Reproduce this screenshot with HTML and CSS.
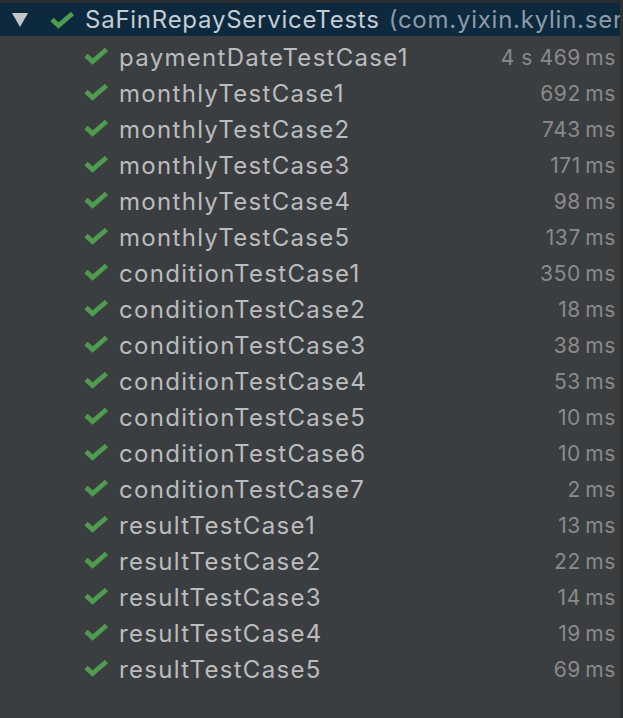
FILE: index.html
```html
<!DOCTYPE html>
<html>
<head>
<meta charset="utf-8">
<link rel="stylesheet" href="styles.css">
</head>
<body>
<div class="panel">
  <div class="topline"></div>
  <div class="tree">
    <div class="suite">
      <span class="arrow"></span>
      <svg class="check" viewBox="0 0 26 18"><path d="M2 8.5 L8.5 14.5 L22.5 2.5" /></svg>
      <span class="suite-name">SaFinRepayServiceTests</span>
      <span class="pkg">(com.yixin.kylin.ser</span>
    </div>
    <ul class="tests">
      <li class="test"><svg class="check" viewBox="0 0 26 18"><path d="M2 8.5 L8.5 14.5 L22.5 2.5" /></svg><span class="name">paymentDateTestCase1</span><span class="time">4 s 469&#8201;ms</span></li>
      <li class="test"><svg class="check" viewBox="0 0 26 18"><path d="M2 8.5 L8.5 14.5 L22.5 2.5" /></svg><span class="name">monthlyTestCase1</span><span class="time">692&#8201;ms</span></li>
      <li class="test"><svg class="check" viewBox="0 0 26 18"><path d="M2 8.5 L8.5 14.5 L22.5 2.5" /></svg><span class="name">monthlyTestCase2</span><span class="time">743&#8201;ms</span></li>
      <li class="test"><svg class="check" viewBox="0 0 26 18"><path d="M2 8.5 L8.5 14.5 L22.5 2.5" /></svg><span class="name">monthlyTestCase3</span><span class="time">171&#8201;ms</span></li>
      <li class="test"><svg class="check" viewBox="0 0 26 18"><path d="M2 8.5 L8.5 14.5 L22.5 2.5" /></svg><span class="name">monthlyTestCase4</span><span class="time">98&#8201;ms</span></li>
      <li class="test"><svg class="check" viewBox="0 0 26 18"><path d="M2 8.5 L8.5 14.5 L22.5 2.5" /></svg><span class="name">monthlyTestCase5</span><span class="time">137&#8201;ms</span></li>
      <li class="test"><svg class="check" viewBox="0 0 26 18"><path d="M2 8.5 L8.5 14.5 L22.5 2.5" /></svg><span class="name">conditionTestCase1</span><span class="time">350&#8201;ms</span></li>
      <li class="test"><svg class="check" viewBox="0 0 26 18"><path d="M2 8.5 L8.5 14.5 L22.5 2.5" /></svg><span class="name">conditionTestCase2</span><span class="time">18&#8201;ms</span></li>
      <li class="test"><svg class="check" viewBox="0 0 26 18"><path d="M2 8.5 L8.5 14.5 L22.5 2.5" /></svg><span class="name">conditionTestCase3</span><span class="time">38&#8201;ms</span></li>
      <li class="test"><svg class="check" viewBox="0 0 26 18"><path d="M2 8.5 L8.5 14.5 L22.5 2.5" /></svg><span class="name">conditionTestCase4</span><span class="time">53&#8201;ms</span></li>
      <li class="test"><svg class="check" viewBox="0 0 26 18"><path d="M2 8.5 L8.5 14.5 L22.5 2.5" /></svg><span class="name">conditionTestCase5</span><span class="time">10&#8201;ms</span></li>
      <li class="test"><svg class="check" viewBox="0 0 26 18"><path d="M2 8.5 L8.5 14.5 L22.5 2.5" /></svg><span class="name">conditionTestCase6</span><span class="time">10&#8201;ms</span></li>
      <li class="test"><svg class="check" viewBox="0 0 26 18"><path d="M2 8.5 L8.5 14.5 L22.5 2.5" /></svg><span class="name">conditionTestCase7</span><span class="time">2&#8201;ms</span></li>
      <li class="test"><svg class="check" viewBox="0 0 26 18"><path d="M2 8.5 L8.5 14.5 L22.5 2.5" /></svg><span class="name">resultTestCase1</span><span class="time">13&#8201;ms</span></li>
      <li class="test"><svg class="check" viewBox="0 0 26 18"><path d="M2 8.5 L8.5 14.5 L22.5 2.5" /></svg><span class="name">resultTestCase2</span><span class="time">22&#8201;ms</span></li>
      <li class="test"><svg class="check" viewBox="0 0 26 18"><path d="M2 8.5 L8.5 14.5 L22.5 2.5" /></svg><span class="name">resultTestCase3</span><span class="time">14&#8201;ms</span></li>
      <li class="test"><svg class="check" viewBox="0 0 26 18"><path d="M2 8.5 L8.5 14.5 L22.5 2.5" /></svg><span class="name">resultTestCase4</span><span class="time">19&#8201;ms</span></li>
      <li class="test"><svg class="check" viewBox="0 0 26 18"><path d="M2 8.5 L8.5 14.5 L22.5 2.5" /></svg><span class="name">resultTestCase5</span><span class="time">69&#8201;ms</span></li>
    </ul>
  </div>
</div>
</body>
</html>
```
FILE: styles.css
```css
html, body {
  margin: 0;
  padding: 0;
  background: #3b3e41;
}
body {
  width: 623px;
  height: 718px;
  overflow: hidden;
  font-family: Inter, "Open Sans", "Liberation Sans", sans-serif;
}
.panel {
  height: 718px;
  display: flex;
  flex-direction: column;
  border-right: 3px solid #2e3032;
  box-sizing: border-box;
}
.topline {
  height: 3px;
  background: #2b2c2e;
  flex: none;
}
.tree {
  flex: 1;
}
.suite {
  height: 33px;
  background: #0d293e;
  display: flex;
  align-items: center;
  white-space: nowrap;
  overflow: hidden;
  font-size: 24px;
  letter-spacing: 0.75px;
}
.arrow {
  width: 0;
  height: 0;
  border-left: 8px solid transparent;
  border-right: 8px solid transparent;
  border-top: 14px solid #c4c6c8;
  margin-left: 12px;
  margin-right: 21px;
  flex: none;
}
.check {
  width: 26px;
  height: 18px;
  flex: none;
}
.check path {
  fill: none;
  stroke: #4e9c4e;
  stroke-width: 4.8;
  stroke-linecap: butt;
  stroke-linejoin: miter;
}
.suite .check {
  margin-right: 9px;
  margin-left: 1px;
}
.suite-name {
  color: #c6ccd2;
  margin-right: 9px;
}
.pkg {
  color: #8f9aa4;
}
.tests {
  list-style: none;
  margin: 0;
  padding: 3px 0 0 0;
}
.test {
  height: 36px;
  display: flex;
  align-items: center;
  padding-left: 84px;
  padding-right: 4px;
}
.test .check {
  margin-right: 9px;
  margin-bottom: 2px;
}
.name {
  color: #bcbcbc;
  font-size: 24px;
  letter-spacing: 1.3px;
  flex: 1;
  white-space: nowrap;
}
.time {
  color: #8a8a8a;
  font-size: 21px;
  letter-spacing: 0.6px;
  white-space: nowrap;
}
```
